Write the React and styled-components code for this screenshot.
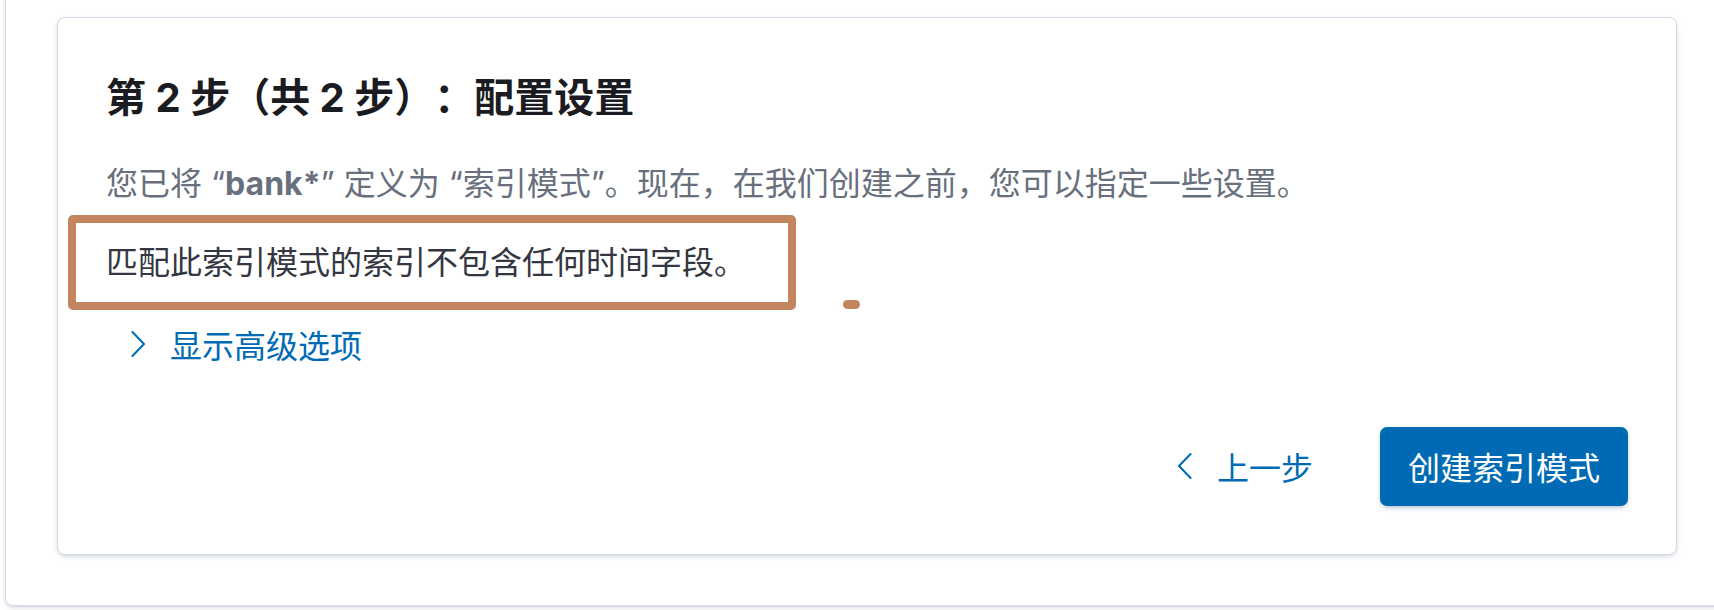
import React from "react";
import styled, { createGlobalStyle } from "styled-components";

const GlobalStyle = createGlobalStyle`
  html, body {
    margin: 0;
    padding: 0;
    background: #ffffff;
    overflow: hidden;
  }
  body {
    font-family: Inter, "Noto Sans CJK SC", sans-serif;
    -webkit-font-smoothing: antialiased;
    text-spacing-trim: space-all;
  }
`;

const Page = styled.div`
  width: 1714px;
  height: 610px;
  overflow: hidden;
`;

const OuterPanel = styled.div`
  margin: -40px -40px 0 5px;
  padding: 56px 76px 50px 51px;
  background: #ffffff;
  border: 1px solid #d3dae6;
  border-radius: 8px;
  box-shadow: 0 2px 4px -1px rgba(152, 162, 179, 0.35),
    0 2px 8px -3px rgba(152, 162, 179, 0.35);
`;

const Card = styled.section`
  display: flex;
  flex-direction: column;
  padding: 56px 48px 48px 48px;
  background: #ffffff;
  border: 1px solid #d3dae6;
  border-radius: 8px;
  box-shadow: 0 2px 4px -1px rgba(152, 162, 179, 0.35),
    0 2px 8px -3px rgba(152, 162, 179, 0.35);
`;

const Title = styled.h2`
  margin: 0;
  font-size: 40px;
  line-height: 48px;
  font-weight: 700;
  color: #1a1c21;
  text-spacing-trim: space-all;
`;

const Description = styled.p`
  margin: 38px 0 0 0;
  font-size: 32px;
  line-height: 48px;
  color: #69707d;
  strong {
    font-weight: 700;
  }
`;

const CalloutRow = styled.div`
  position: relative;
  margin-top: 31px;
  font-size: 32px;
  line-height: 48px;
  color: #343741;
`;

const Annotation = styled.div`
  position: absolute;
  top: -24px;
  left: -38px;
  width: 728px;
  height: 95px;
  box-sizing: border-box;
  border: 8px solid #c2855f;
  border-radius: 5px;
  pointer-events: none;
`;

const AnnotationDot = styled.div`
  position: absolute;
  top: 61px;
  left: 737px;
  width: 17px;
  height: 9px;
  border-radius: 5px;
  background: #c2855f;
`;

const CalloutText = styled.span`
  position: relative;
`;

const LinkButton = styled.button`
  display: inline-flex;
  align-items: center;
  gap: 16px;
  align-self: flex-start;
  height: 80px;
  margin-top: ${(p) => (p.$flush ? "0" : "17px")};
  padding: 0 16px;
  border: none;
  background: transparent;
  color: #006bb4;
  font-family: inherit;
  font-size: 32px;
  font-weight: 400;
  cursor: pointer;
`;

const Footer = styled.div`
  display: flex;
  justify-content: flex-end;
  align-items: center;
  gap: 51px;
  margin-top: 42px;
`;

const PrimaryButton = styled.button`
  height: 79px;
  padding: 0 28px;
  border: none;
  border-radius: 7px;
  background: #006bb4;
  color: #ffffff;
  font-family: inherit;
  font-size: 32px;
  font-weight: 400;
  box-shadow: 0 2px 4px -1px rgba(54, 97, 126, 0.3),
    0 3px 6px -2px rgba(54, 97, 126, 0.2);
  cursor: pointer;
`;

const Chevron = ({ dir }) => (
  <svg width="32" height="32" viewBox="0 0 16 16" aria-hidden="true">
    <path
      d={dir === "left" ? "M10.8 2 L5 8 L10.8 14" : "M5.2 2 L11 8 L5.2 14"}
      fill="none"
      stroke="currentColor"
      strokeWidth="1"
      strokeLinecap="round"
      strokeLinejoin="round"
    />
  </svg>
);

export default function App() {
  return (
    <Page>
      <GlobalStyle />
      <OuterPanel>
        <Card>
          <Title>第 2 步（共 2 步）：配置设置</Title>
          <Description>
            您已将 “<strong>bank*</strong>” 定义为 “索引模式”。现在，在我们创建之前，您可以指定一些设置。
          </Description>
          <CalloutRow>
            <Annotation />
            <AnnotationDot />
            <CalloutText>匹配此索引模式的索引不包含任何时间字段。</CalloutText>
          </CalloutRow>
          <LinkButton type="button">
            <Chevron dir="right" />
            <span>显示高级选项</span>
          </LinkButton>
          <Footer>
            <LinkButton type="button" $flush>
              <Chevron dir="left" />
              <span>上一步</span>
            </LinkButton>
            <PrimaryButton type="button">创建索引模式</PrimaryButton>
          </Footer>
        </Card>
      </OuterPanel>
    </Page>
  );
}
